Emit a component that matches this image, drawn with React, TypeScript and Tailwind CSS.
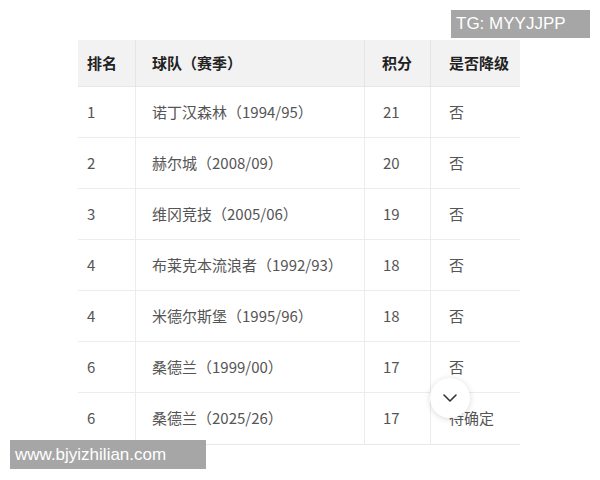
import React from 'react';

const rows = [
  { rank: '1', team: '诺丁汉森林（1994/95）', pts: '21', down: '否' },
  { rank: '2', team: '赫尔城（2008/09）', pts: '20', down: '否' },
  { rank: '3', team: '维冈竞技（2005/06）', pts: '19', down: '否' },
  { rank: '4', team: '布莱克本流浪者（1992/93）', pts: '18', down: '否' },
  { rank: '4', team: '米德尔斯堡（1995/96）', pts: '18', down: '否' },
  { rank: '6', team: '桑德兰（1999/00）', pts: '17', down: '否' },
  { rank: '6', team: '桑德兰（2025/26）', pts: '17', down: '待确定' },
];

const font = { fontFamily: '"Noto Sans CJK SC", "Noto Sans", sans-serif' };

export default function App() {
  return (
    <div className="w-[600px] h-[480px] bg-white relative overflow-hidden" style={font}>
      <div className="pt-[40px] pl-[78px]">
        <div className="w-[442px] border-b border-[#e8e8e8]">
          <div className="flex h-[47px] bg-[#f2f2f2] text-[15px] font-bold text-[#222] border-b border-[#e6e6e6]">
            <div className="w-[58px] flex items-center pl-[9px] border-r border-[#e4e4e4]">排名</div>
            <div className="w-[229px] flex items-center pl-[16px] border-r border-[#e4e4e4]">球队（赛季）</div>
            <div className="w-[66px] flex items-center pl-[17px] border-r border-[#e4e4e4]">积分</div>
            <div className="flex-1 flex items-center pl-[18px]">是否降级</div>
          </div>
          {rows.map((r, i) => (
            <div
              key={i}
              className={`flex h-[51px] text-[15px] text-[#555] ${i < rows.length - 1 ? 'border-b border-[#ececec]' : ''}`}
            >
              <div className="w-[58px] flex items-center pl-[9px] border-r border-[#ececec]">{r.rank}</div>
              <div className="w-[229px] flex items-center pl-[16px] border-r border-[#ececec]">{r.team}</div>
              <div className="w-[66px] flex items-center pl-[18px] border-r border-[#ececec]">{r.pts}</div>
              <div className="flex-1 flex items-center pl-[18px]">{r.down}</div>
            </div>
          ))}
        </div>
      </div>

      <div className="absolute left-[430px] top-[378px] w-[40px] h-[40px] rounded-full bg-white shadow-[0_1px_6px_rgba(0,0,0,0.15)] flex items-center justify-center">
        <svg width="16" height="10" viewBox="0 0 16 10" fill="none">
          <path d="M2 2l6 6 6-6" stroke="#333" strokeWidth="1.6" strokeLinecap="round" strokeLinejoin="round" />
        </svg>
      </div>

      <div
        className="absolute left-[451px] top-[10px] w-[139px] h-[28px] bg-[#a6a6a6] text-white text-[17px] flex items-center pl-[5px]"
        style={{ fontFamily: '"Liberation Sans", Arial, sans-serif' }}
      >
        TG: MYYJJPP
      </div>
      <div
        className="absolute left-[10px] top-[440px] w-[196px] h-[29px] bg-[#a6a6a6] text-white text-[17px] flex items-center pl-[5px]"
        style={{ fontFamily: '"Liberation Sans", Arial, sans-serif' }}
      >
        www.bjyizhilian.com
      </div>
    </div>
  );
}
